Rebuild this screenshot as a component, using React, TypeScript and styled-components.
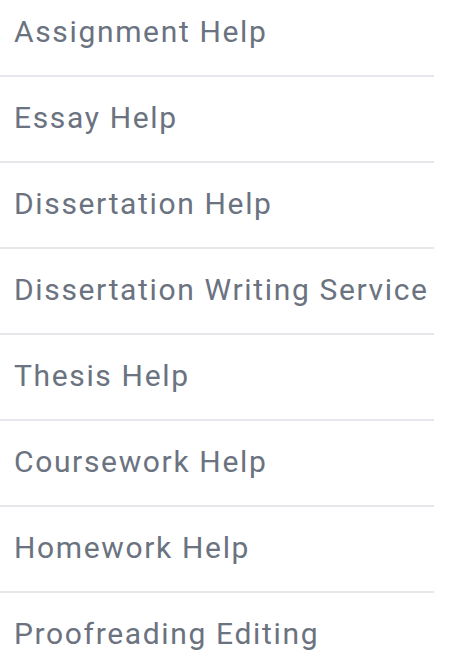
import React from "react";
import styled, { createGlobalStyle } from "styled-components";

const GlobalStyle = createGlobalStyle`
  html, body {
    margin: 0;
    padding: 0;
    background: #ffffff;
  }
  body {
    font-family: Roboto, "Liberation Sans", Arial, sans-serif;
  }
`;

const List = styled.ul`
  list-style: none;
  margin: 0;
  padding: 0;
  width: 434px;
`;

const Item = styled.li`
  padding: 23px 0 25px 14px;
  border-bottom: 2px solid #e6e7eb;
  font-size: 30px;
  line-height: 36px;
  letter-spacing: 1.65px;
  color: #6b7280;
  white-space: nowrap;

  &:first-child {
    padding-top: 14px;
  }
`;

const items = [
  "Assignment Help",
  "Essay Help",
  "Dissertation Help",
  "Dissertation Writing Service",
  "Thesis Help",
  "Coursework Help",
  "Homework Help",
  "Proofreading Editing",
];

export default function App() {
  return (
    <>
      <GlobalStyle />
      <List>
        {items.map((t) => (
          <Item key={t}>{t}</Item>
        ))}
      </List>
    </>
  );
}
